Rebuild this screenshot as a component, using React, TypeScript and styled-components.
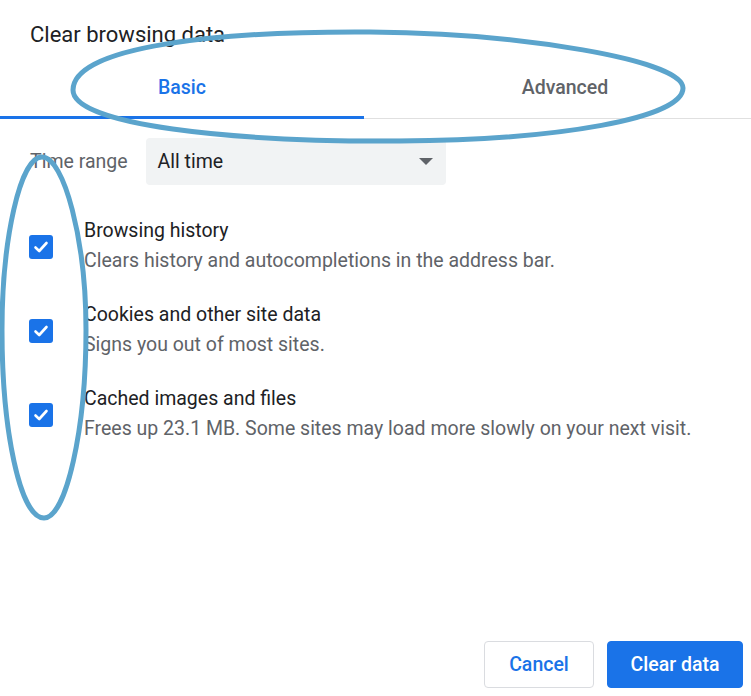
import React from 'react';
import styled, { createGlobalStyle } from 'styled-components';

const GlobalStyle = createGlobalStyle`
  html, body {
    margin: 0;
    padding: 0;
    background: #fff;
  }
  body {
    font-family: Roboto, "Liberation Sans", Arial, sans-serif;
  }
`;

const Dialog = styled.div`
  position: relative;
  width: 751px;
  height: 696px;
  display: flex;
  flex-direction: column;
  overflow: hidden;
  background: #fff;
`;

const Title = styled.h1`
  margin: 0;
  padding: 22px 0 0 30px;
  font-size: 22px;
  font-weight: 400;
  line-height: 26px;
  color: #202124;
`;

const TabRow = styled.div`
  display: flex;
  border-bottom: 1px solid #e0e0e0;
`;

interface TabProps {
  $active?: boolean;
  $width?: number;
  $shift?: number;
}

const Tab = styled.div<TabProps>`
  flex: ${p => (p.$width ? `0 0 ${p.$width}px` : '1 1 auto')};
  box-sizing: border-box;
  padding: 27px 0 15px ${p => p.$shift || 0}px;
  text-align: center;
  font-size: 19.5px;
  font-weight: 500;
  line-height: 26px;
  color: ${p => (p.$active ? '#1a73e8' : '#5f6368')};
  border-bottom: 3px solid ${p => (p.$active ? '#1a73e8' : 'transparent')};
  margin-bottom: -1px;
`;

const TimeRow = styled.div`
  display: flex;
  align-items: center;
  gap: 18px;
  padding: 19px 0 0 30px;
`;

const Label = styled.span`
  font-size: 19.5px;
  color: #5f6368;
`;

const Select = styled.div`
  width: 300px;
  height: 47px;
  box-sizing: border-box;
  display: flex;
  align-items: center;
  justify-content: space-between;
  padding: 0 13px 0 12px;
  background: #f1f3f4;
  border-radius: 4px;
  font-size: 19.5px;
  color: #202124;
`;

const Caret = styled.span`
  width: 0;
  height: 0;
  border-left: 7px solid transparent;
  border-right: 7px solid transparent;
  border-top: 7px solid #5f6368;
`;

const Options = styled.div`
  display: flex;
  flex-direction: column;
  gap: 30px;
  padding: 34px 0 0 29px;
`;

const Option = styled.div`
  display: flex;
  align-items: center;
  gap: 31px;
`;

const Box = styled.span`
  flex: 0 0 auto;
  width: 24px;
  height: 24px;
  margin-top: 2px;
  border-radius: 3px;
  background: #1a73e8;
  display: flex;
  align-items: center;
  justify-content: center;
`;

const OptionText = styled.div`
  display: flex;
  flex-direction: column;
  gap: 6px;
  font-size: 19.5px;
  line-height: 24px;
`;

const OptionTitle = styled.span`
  color: #202124;
`;

const OptionDesc = styled.span`
  color: #5f6368;
`;

const Footer = styled.div`
  margin-top: auto;
  display: flex;
  justify-content: flex-end;
  gap: 13px;
  padding: 0 8px 8px 0;
`;

const Button = styled.button<{ $primary?: boolean; $width: number }>`
  width: ${p => p.$width}px;
  height: 47px;
  box-sizing: border-box;
  padding: 0;
  border-radius: 4px;
  font-family: inherit;
  font-size: 19.5px;
  font-weight: 500;
  cursor: pointer;
  border: 1px solid ${p => (p.$primary ? '#1a73e8' : '#dadce0')};
  background: ${p => (p.$primary ? '#1a73e8' : '#fff')};
  color: ${p => (p.$primary ? '#fff' : '#1a73e8')};
`;

// hand drawn marker rings lying over the dialog
const Marks = styled.svg`
  position: absolute;
  top: 0;
  left: 0;
  pointer-events: none;
`;

const Check = () => (
  <svg width="18" height="18" viewBox="0 0 18 18">
    <polyline points="3.5,9.5 7.2,13 14.5,5" fill="none" stroke="#fff" strokeWidth="2.6" strokeLinecap="round" strokeLinejoin="round" />
  </svg>
);

const items = [
  { title: 'Browsing history', desc: 'Clears history and autocompletions in the address bar.' },
  { title: 'Cookies and other site data', desc: 'Signs you out of most sites.' },
  { title: 'Cached images and files', desc: 'Frees up 23.1 MB. Some sites may load more slowly on your next visit.' },
];

export default function App() {
  return (
    <>
      <GlobalStyle />
      <Dialog>
        <Title>Clear browsing data</Title>
        <TabRow>
          <Tab $active $width={364}>Basic</Tab>
          <Tab $shift={15}>Advanced</Tab>
        </TabRow>
        <TimeRow>
          <Label>Time range</Label>
          <Select>
            <span>All time</span>
            <Caret />
          </Select>
        </TimeRow>
        <Options>
          {items.map(item => (
            <Option key={item.title}>
              <Box><Check /></Box>
              <OptionText>
                <OptionTitle>{item.title}</OptionTitle>
                <OptionDesc>{item.desc}</OptionDesc>
              </OptionText>
            </Option>
          ))}
        </Options>
        <Footer>
          <Button $width={110}>Cancel</Button>
          <Button $primary $width={136}>Clear data</Button>
        </Footer>
        <Marks width="751" height="696" viewBox="0 0 751 696">
          <path
            d="M 73 90 C 73 46, 220 31, 370 32 C 520 33, 683 60, 683 88 C 683 118, 560 140, 400 141 C 230 142, 73 125, 73 90 Z"
            fill="none"
            stroke="#5ba4cc"
            strokeWidth="5"
          />
          <path
            d="M 42 157 C 64 157, 86 240, 86 330 C 86 430, 66 518, 44 518 C 20 518, 2 430, 2 330 C 2 240, 20 157, 42 157 Z"
            fill="none"
            stroke="#5ba4cc"
            strokeWidth="5"
          />
        </Marks>
      </Dialog>
    </>
  );
}
